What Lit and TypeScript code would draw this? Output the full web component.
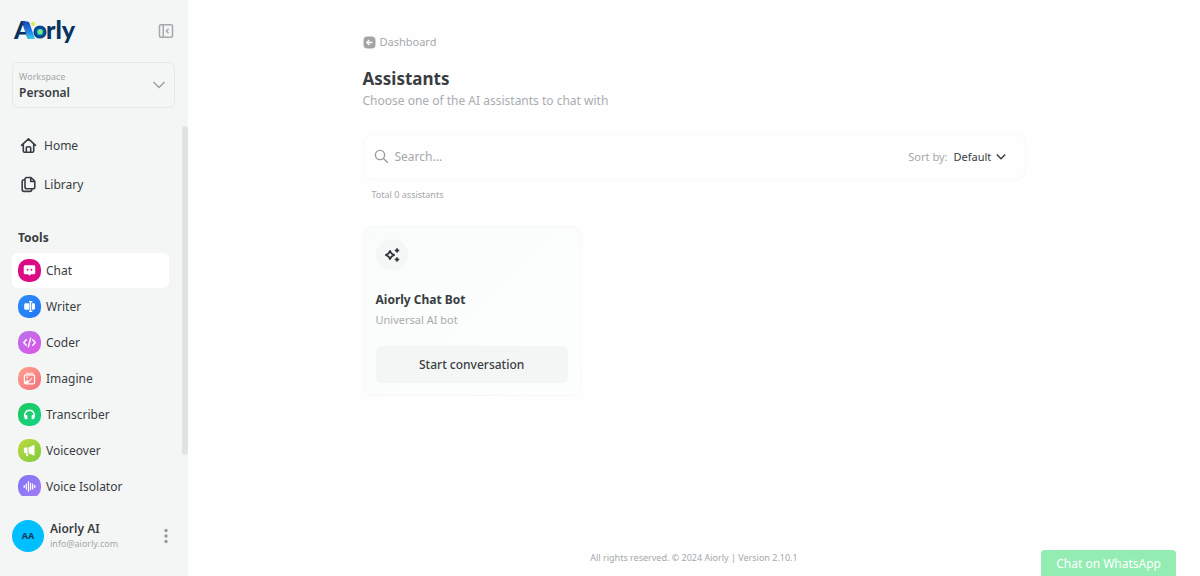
import { LitElement, html, css, svg } from "lit";
import { customElement, state } from "lit/decorators.js";

const glyphs: Record<string, unknown> = {
  chat: svg`<path fill="#fff" d="M7.500 6.500h9A1.500 1.500 0 0 1 18 8v6.500a1.500 1.500 0 0 1-1.500 1.500h-3L12 17.500 10.500 16h-3A1.500 1.500 0 0 1 6 14.500V8a1.500 1.500 0 0 1 1.500-1.500z"/><circle cx="10" cy="11.300" r="1" fill="#dc0a83"/><circle cx="14" cy="11.300" r="1" fill="#dc0a83"/>`,
  writer: svg`<path fill="#fff" d="M8 8.500h4v7H8A1.500 1.500 0 0 1 6.500 14v-4A1.500 1.500 0 0 1 8 8.500zM14.500 8.500h1.700a1.500 1.500 0 0 1 1.500 1.500v4a1.500 1.500 0 0 1-1.500 1.500h-1.700z"/><path fill="none" stroke="#fff" stroke-width="1.300" d="M11.500 6.800h3.500M11.500 17.200h3.500M13.200 6.800v10.400"/>`,
  coder: svg`<path fill="none" stroke="#fff" stroke-width="1.500" stroke-linecap="round" stroke-linejoin="round" d="M8.600 9.200 6 12l2.600 2.800M15.400 9.200 18 12l-2.600 2.800M13.200 7.500l-2.400 9"/>`,
  imagine: svg`<path fill="none" stroke="#fff" stroke-opacity=".85" stroke-width="1" d="M8 6.500h8"/><rect x="6.700" y="8.200" width="10.600" height="9.300" rx="1.500" fill="none" stroke="#fff" stroke-width="1.300"/><path fill="#fff" d="M7 17.300v-1.500l2.500-2.300 1.500 1 3.200-3 .8.600-5 5.200z"/><circle cx="9.500" cy="10.800" r=".9" fill="#fff"/>`,
  transcriber: svg`<path fill="none" stroke="#fff" stroke-width="1.500" d="M7.400 14.500a5 5 0 1 1 9.200 0"/><path fill="#fff" d="M7 12.500h1.800a1 1 0 0 1 1 1v3.500H8.500A1.800 1.800 0 0 1 6.700 15zM17 12.500h-1.800a1 1 0 0 0-1 1v3.500h1.300a1.800 1.800 0 0 0 1.800-1.800z"/>`,
  voiceover: svg`<path fill="#fff" d="M11 8.800 17.200 6v11.500L11 14.800zM7.600 8.800H10v6H7.600A1.500 1.500 0 0 1 6.100 13.300v-3a1.500 1.500 0 0 1 1.500-1.500zM8 15.500h2.500V18H9.200z"/>`,
  isolator: svg`<path fill="none" stroke="#fff" stroke-width="1.300" stroke-linecap="round" d="M6.500 11v2M8.700 9.500v5M10.900 7v10M13.100 8.800v6.400M15.300 9.500v5M17.500 11v2"/>`,
};

const tools = [
  { id: "chat", label: "Chat", from: "#dc0a83", to: "#dc0a83" },
  { id: "writer", label: "Writer", from: "#2b8df8", to: "#2377f5" },
  { id: "coder", label: "Coder", from: "#b873ea", to: "#df55e6" },
  { id: "imagine", label: "Imagine", from: "#fda28f", to: "#f4707a" },
  { id: "transcriber", label: "Transcriber", from: "#1fc75a", to: "#12d487" },
  { id: "voiceover", label: "Voiceover", from: "#c0d93f", to: "#7bcb3c" },
  { id: "isolator", label: "Voice Isolator", from: "#7c75f4", to: "#a77cf6" },
];

@customElement("app-root")
export class AppRoot extends LitElement {
  @state() private current = "chat";

  static styles = css`
    :host {
      display: flex;
      height: 100vh;
      overflow: hidden;
      font-family: "Noto Sans", "Open Sans", sans-serif;
      font-size: 12px;
      line-height: 16px;
      color: #393d41;
      background: #fefefe;
    }
    * { box-sizing: border-box; }
    a { color: inherit; text-decoration: none; }
    button, input, select { font: inherit; color: inherit; }
    button { border: 0; padding: 0; background: none; cursor: pointer; }
    svg { display: block; flex: none; }
    h1, h2, p { margin: 0; }
    .side {
      flex: none;
      width: 188px;
      display: flex;
      flex-direction: column;
      background: #f4f6f6;
    }
    .brand {
      display: flex;
      align-items: center;
      justify-content: space-between;
      padding: 11px 14px 11px 13px;
    }
    .fold { color: #a5a8aa; }
    .workspace {
      display: flex;
      align-items: center;
      justify-content: space-between;
      margin: 0 13px 18px 12px;
      padding: 6px 8px 6px 6px;
      border: 1px solid #e6e8e8;
      border-radius: 6px;
      text-align: left;
    }
    .small { display: block; font-size: 9px; color: #a3a6a8; }
    .strong { display: block; font-weight: 600; }
    .scroll { position: relative; flex: 1; min-height: 0; }
    .list {
      height: 100%;
      overflow: hidden;
      padding: 0 19px 0 12px;
    }
    .thumb {
      position: absolute;
      top: 0;
      right: 0;
      width: 6px;
      height: 89%;
      border-radius: 3px;
      background: #e1e2e2;
    }
    .link {
      display: flex;
      align-items: center;
      gap: 7px;
      height: 39px;
      padding: 0 8px;
    }
    .heading { font-size: 12px; font-weight: 700; margin: 26px 0 7px; padding-left: 6px; }
    .tools { display: grid; gap: 1px; }
    .tool {
      display: flex;
      align-items: center;
      gap: 5px;
      height: 35px;
      padding: 0 6px;
      border-radius: 6px;
    }
    .tool.on { background: #fff; }
    .badge {
      width: 23px;
      height: 23px;
      border-radius: 10px;
    }
    .account {
      display: flex;
      align-items: center;
      gap: 6px;
      padding: 24px 14px 24px 12px;
    }
    .avatar {
      display: grid;
      place-items: center;
      width: 32px;
      height: 32px;
      border-radius: 50%;
      background: #00bfff;
      font-size: 9px;
      font-weight: 700;
      color: #123a5c;
    }
    .who { flex: 1; }
    .who .small { line-height: 14px; }
    .main {
      flex: 1;
      min-width: 0;
      display: flex;
      flex-direction: column;
      align-items: center;
      padding: 34px 24px 10px;
    }
    .page { flex: 1; width: 100%; max-width: 663px; }
    .back { display: inline-flex; align-items: center; gap: 4px; font-size: 11px; color: #a5a8aa; }
    .title { font-size: 17px; line-height: 24px; font-weight: 700; margin-top: 14px; }
    .lead { line-height: 20px; color: #aaadaf; }
    .bar {
      display: flex;
      align-items: center;
      gap: 6px;
      height: 46px;
      margin-top: 23px;
      padding: 0 19px 0 10px;
      border: 1px solid #f7f8f8;
      border-radius: 10px;
      color: #a5a8aa;
      font-size: 11px;
    }
    .search { flex: 1; min-width: 0; border: 0; outline: 0; padding: 0; background: none; font-size: 12px; }
    .search::placeholder { color: #a5a8aa; opacity: 1; }
    .sort { display: flex; align-items: center; gap: 6px; }
    .pick { position: relative; display: flex; align-items: center; color: #393d41; }
    .select { appearance: none; border: 0; outline: 0; background: none; padding: 0 14px 0 0; }
    .caret { position: absolute; right: 0; pointer-events: none; }
    .total { font-size: 9px; color: #a5a8aa; margin: 7px 9px 23px; }
    .grid { display: grid; grid-template-columns: repeat(3, 1fr); gap: 4px; }
    .card {
      padding: 12px;
      border: 1px solid #f6f8f8;
      border-radius: 10px;
      background: linear-gradient(135deg, #fafcfc, #fdfefe);
    }
    .round {
      display: grid;
      place-items: center;
      width: 32px;
      height: 32px;
      border-radius: 50%;
      background: #f5f6f6;
    }
    .name { font-size: 12px; font-weight: 700; margin: 21px 0 4px; }
    .about { font-size: 11px; color: #a9acae; margin-bottom: 18px; }
    .start {
      width: 100%;
      height: 37px;
      padding-top: 2px;
      border-radius: 6px;
      background: #f4f6f6;
      font-weight: 500;
    }
    .foot { font-size: 9px; color: #a5a8aa; }
    .whatsapp {
      position: fixed;
      right: 24px;
      bottom: 0;
      height: 26px;
      padding: 6px 15px 4px;
      border-radius: 4px 4px 0 0;
      background: #93edb3;
      color: #fff;
    }
  `;

  render() {
    return html`
      <aside class="side">
        <div class="brand">
          <a href="#" aria-label="Aiorly">
            <svg width="68" height="40" viewBox="0 0 68 40">
              <defs>
                <linearGradient id="leg" x1="0" y1="0" x2="0" y2="1">
                  <stop offset="0" stop-color="#1746b5" />
                  <stop offset=".6" stop-color="#2383ee" />
                  <stop offset="1" stop-color="#37d4f0" />
                </linearGradient>
              </defs>
              <text x="1" y="28" font-family="Lato, sans-serif" font-weight="900" font-size="25" fill="#06335f">A</text>
              <path d="M9.500 10.500h5q1.500 0 2.200 2L22 28h-5.500q-2 0-2.800-2.500z" fill="url(#leg)" />
              <circle cx="20" cy="12.800" r="2.100" fill="#d9ee4b" />
              <text x="33" y="28" font-family="Lato, sans-serif" font-weight="900" font-size="25" fill="#06335f">rly</text>
              <circle cx="27" cy="21" r="4.900" fill="#1bb5d8" stroke="#064a8c" stroke-width="3.400" />
              <circle cx="27.300" cy="20.800" r="2.300" fill="#7df06a" />
            </svg>
          </a>
          <button class="fold" aria-label="Collapse sidebar">
            <svg width="16" height="16" viewBox="0 0 16 16" fill="none" stroke="currentColor" stroke-width="1.500">
              <rect x="1.500" y="1.700" width="13" height="12.600" rx="1.500" />
              <path d="M5.200 2v12M10.600 5.800 8.400 8l2.200 2.200" />
            </svg>
          </button>
        </div>
        <button class="workspace">
          <span><span class="small">Workspace</span><span class="strong">Personal</span></span>
          <svg width="14" height="14" viewBox="0 0 14 14" fill="none" stroke="#9fa2a4" stroke-width="1.500"><path d="m1.500 4 5.500 5.500L12.500 4" /></svg>
        </button>
        <div class="scroll">
          <nav class="list">
            <a class="link" href="#">
              <svg width="17" height="17" viewBox="0 0 17 17" fill="none" stroke="#393d41" stroke-width="1.600" stroke-linejoin="round" stroke-linecap="round">
                <path d="M1.500 8.300 8.500 1.800l7 6.500M3.300 7v7a1.300 1.300 0 0 0 1.300 1.300h7.800a1.300 1.300 0 0 0 1.300-1.300V7M6.300 15v-4a1.200 1.200 0 0 1 1.200-1.200h2A1.200 1.200 0 0 1 10.700 11v4" />
              </svg>
              Home
            </a>
            <a class="link" href="#">
              <svg width="17" height="17" viewBox="0 0 17 17" fill="none" stroke="#393d41" stroke-width="1.600" stroke-linejoin="round" stroke-linecap="round">
                <path d="M6.800 1.500h4.200l3.800 3.800v5.700a1.800 1.800 0 0 1-1.800 1.800H6.800A1.800 1.800 0 0 1 5 11V3.300a1.800 1.800 0 0 1 1.800-1.800zM10.700 1.700v3.800h3.800M4.800 3.800H4A1.800 1.800 0 0 0 2.200 5.600v8A1.800 1.800 0 0 0 4 15.400h6a1.800 1.800 0 0 0 1.800-1.800V13" />
              </svg>
              Library
            </a>
            <h2 class="heading">Tools</h2>
            <div class="tools">
              ${tools.map(
                (t) => html`<a class="tool ${t.id === this.current ? "on" : ""}" href="#" @click=${() => (this.current = t.id)}>
                  <svg class="badge" style="background:linear-gradient(135deg,${t.from},${t.to})" viewBox="0 0 24 24">${glyphs[t.id]}</svg>
                  ${t.label}
                </a>`
              )}
            </div>
          </nav>
          <div class="thumb"></div>
        </div>
        <div class="account">
          <span class="avatar">AA</span>
          <span class="who"><span class="strong">Aiorly AI</span><span class="small">info@aiorly.com</span></span>
          <button aria-label="Account menu">
            <svg width="16" height="16" viewBox="0 0 16 16" fill="#97999b"><circle cx="8" cy="2.500" r="1.700" /><circle cx="8" cy="8" r="1.700" /><circle cx="8" cy="13.500" r="1.700" /></svg>
          </button>
        </div>
      </aside>
      <main class="main">
        <div class="page">
          <a class="back" href="#">
            <svg width="13" height="13" viewBox="0 0 13 13"><rect x=".5" y=".5" width="12" height="12" rx="4" fill="#a2a5a7" /><path d="M9.300 6.500H4M6.300 4 3.800 6.500 6.300 9" fill="none" stroke="#fff" stroke-width="1.300" /></svg>
            Dashboard
          </a>
          <h1 class="title">Assistants</h1>
          <p class="lead">Choose one of the AI assistants to chat with</p>
          <div class="bar">
            <svg width="15" height="15" viewBox="0 0 15 15" fill="none" stroke="#999c9e" stroke-width="1.400"><circle cx="6" cy="6" r="4.600" /><path d="m9.500 9.500 4.300 4.300" /></svg>
            <input class="search" type="search" placeholder="Search..." aria-label="Search" />
            <div class="sort">
              <label for="sort">Sort by:</label>
              <span class="pick">
                <select id="sort" class="select"><option>Default</option></select>
                <svg class="caret" width="10" height="10" viewBox="0 0 10 10" fill="none" stroke="#393d41" stroke-width="1.500"><path d="m.8 2.500 4.200 4.200 4.200-4.200" /></svg>
              </span>
            </div>
          </div>
          <p class="total">Total 0 assistants</p>
          <div class="grid">
            <article class="card">
              <span class="round">
                <svg width="18" height="18" viewBox="0 0 18 18">
                  <path d="M7 4.800 8.500 7.500 11.200 9 8.500 10.500 7 13.200 5.500 10.500 2.800 9 5.500 7.500z" fill="none" stroke="#2e3237" stroke-width="1.700" stroke-linejoin="round" />
                  <path d="m14 2.300.8 1.400 1.400.8-1.400.8-.8 1.400-.8-1.400-1.400-.8 1.400-.8zM14 11.300l.8 1.400 1.400.8-1.400.8-.8 1.400-.8-1.400-1.400-.8 1.400-.8z" fill="#2e3237" stroke="#2e3237" stroke-width=".8" />
                </svg>
              </span>
              <h2 class="name">Aiorly Chat Bot</h2>
              <p class="about">Universal AI bot</p>
              <button class="start">Start conversation</button>
            </article>
          </div>
        </div>
        <footer class="foot">All rights reserved. © 2024 Aiorly | Version 2.10.1</footer>
      </main>
      <a class="whatsapp" href="#">Chat on WhatsApp</a>
    `;
  }
}
